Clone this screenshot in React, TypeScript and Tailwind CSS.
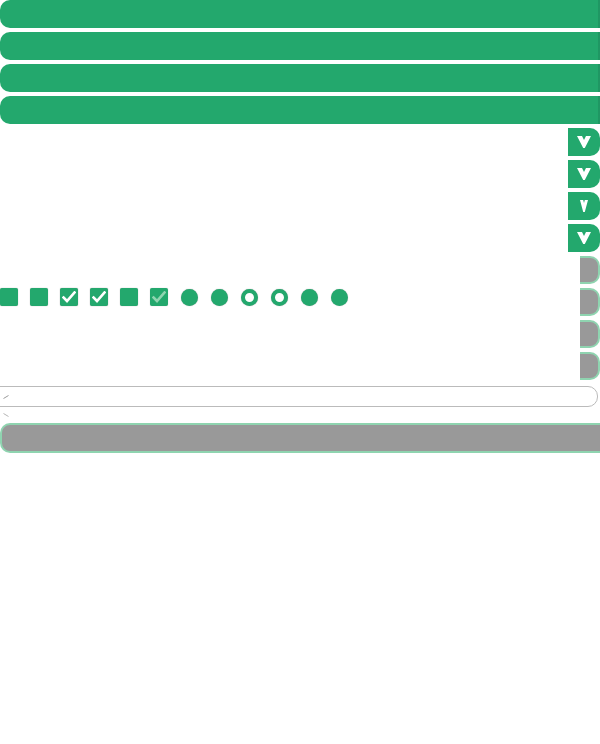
import React from "react";

const Vee = ({ narrow = false }: { narrow?: boolean }) =>
  narrow ? (
    <svg width="8" height="12" viewBox="0 0 8 12">
      <polygon points="0,0 3.2,0 4,3 4.8,0 8,0 4.8,12 3.2,12" fill="#fff" />
    </svg>
  ) : (
    <svg width="14" height="12" viewBox="0 0 14 12">
      <polygon points="0,0 5,0 7,4 9,0 14,0 7.8,12 6.2,12" fill="#fff" />
    </svg>
  );

const Check = ({ faded = false }: { faded?: boolean }) => (
  <svg width="14" height="12" viewBox="0 0 14 12">
    <path d="M1.5 6.5 L5 10 L12.5 1.5" fill="none" stroke={faded ? "#8fd4b0" : "#fff"} strokeWidth="2.6" strokeLinecap="square" />
  </svg>
);

export default function App() {
  const bars = [0, 1, 2, 3];
  return (
    <div className="w-[600px] h-[744px] bg-white overflow-hidden flex flex-col" style={{ fontFamily: "Liberation Sans, sans-serif" }}>
      <div className="flex flex-col gap-1">
        {bars.map((b) => (
          <div key={b} className="h-7 w-full bg-[#23a86d] rounded-l-[10px] border-r-2 border-[#1f9763]" />
        ))}
      </div>
      <div className="flex flex-col gap-1 items-end mt-1">
        {bars.map((b) => (
          <div key={b} className="h-7 w-[32px] bg-[#23a86d] rounded-r-[10px] flex items-center justify-center">
            <Vee narrow={b === 2} />
          </div>
        ))}
      </div>
      <div className="flex flex-row mt-1">
        <div className="flex-1 pt-8">
          <div className="flex flex-row gap-3 items-center h-[18px]">
            <div className="w-[18px] h-[18px] bg-[#23a86d] rounded-[2px] shadow-[0_0_1px_rgba(0,0,0,0.4)]" />
            <div className="w-[18px] h-[18px] bg-[#23a86d] rounded-[2px] shadow-[0_0_1px_rgba(0,0,0,0.4)]" />
            <div className="w-[18px] h-[18px] bg-[#23a86d] rounded-[2px] shadow-[0_0_1px_rgba(0,0,0,0.5)] flex items-center justify-center"><Check /></div>
            <div className="w-[18px] h-[18px] bg-[#23a86d] rounded-[2px] shadow-[0_0_1px_rgba(0,0,0,0.5)] flex items-center justify-center"><Check /></div>
            <div className="w-[18px] h-[18px] bg-[#23a86d] rounded-[2px] shadow-[0_0_1px_rgba(0,0,0,0.4)]" />
            <div className="w-[18px] h-[18px] bg-[#23a86d] rounded-[2px] shadow-[0_0_1px_rgba(0,0,0,0.3)] flex items-center justify-center"><Check faded /></div>
            <div className="w-[18px] h-[18px] flex items-center justify-center"><div className="w-[17px] h-[17px] rounded-full bg-[#23a86d] shadow-[0_0_1px_rgba(0,0,0,0.4)]" /></div>
            <div className="w-[18px] h-[18px] flex items-center justify-center"><div className="w-[17px] h-[17px] rounded-full bg-[#23a86d] shadow-[0_0_1px_rgba(0,0,0,0.4)]" /></div>
            <div className="w-[18px] h-[18px] flex items-center justify-center"><div className="w-[17px] h-[17px] rounded-full bg-white border-[4px] border-[#23a86d] shadow-[0_0_1px_rgba(0,0,0,0.4)]" /></div>
            <div className="w-[18px] h-[18px] flex items-center justify-center"><div className="w-[17px] h-[17px] rounded-full bg-white border-[4px] border-[#23a86d] shadow-[0_0_1px_rgba(0,0,0,0.4)]" /></div>
            <div className="w-[18px] h-[18px] flex items-center justify-center"><div className="w-[17px] h-[17px] rounded-full bg-[#23a86d] shadow-[0_0_1px_rgba(0,0,0,0.4)]" /></div>
            <div className="w-[18px] h-[18px] flex items-center justify-center"><div className="w-[17px] h-[17px] rounded-full bg-[#23a86d] shadow-[0_0_1px_rgba(0,0,0,0.3)]" /></div>
          </div>
        </div>
        <div className="flex flex-col gap-1">
          {bars.map((b) => (
            <div key={b} className="h-7 w-[20px] bg-[#999999] rounded-r-[10px] border-y-2 border-r-2 border-[#8fd4b0]" />
          ))}
        </div>
      </div>
      <div className="mt-[6px] ml-[-12px] mr-[2px] h-[21px] border border-[#bbbbbb] rounded-r-[10px] flex items-center">
        <svg className="ml-[14px]" width="6" height="4" viewBox="0 0 6 4">
          <path d="M0.5 3.5 L5.5 0.5" stroke="#9a9a9a" strokeWidth="1" fill="none" />
        </svg>
      </div>
      <div className="h-[16px] flex items-center">
        <svg className="ml-[3px]" width="6" height="4" viewBox="0 0 6 4">
          <path d="M0.5 0.5 L5.5 3.5" stroke="#b5b5b5" strokeWidth="1" fill="none" />
        </svg>
      </div>
      <div className="h-[30px] bg-[#999999] rounded-l-[10px] border-2 border-r-0 border-[#8fd4b0] mr-[-4px]" />
    </div>
  );
}
